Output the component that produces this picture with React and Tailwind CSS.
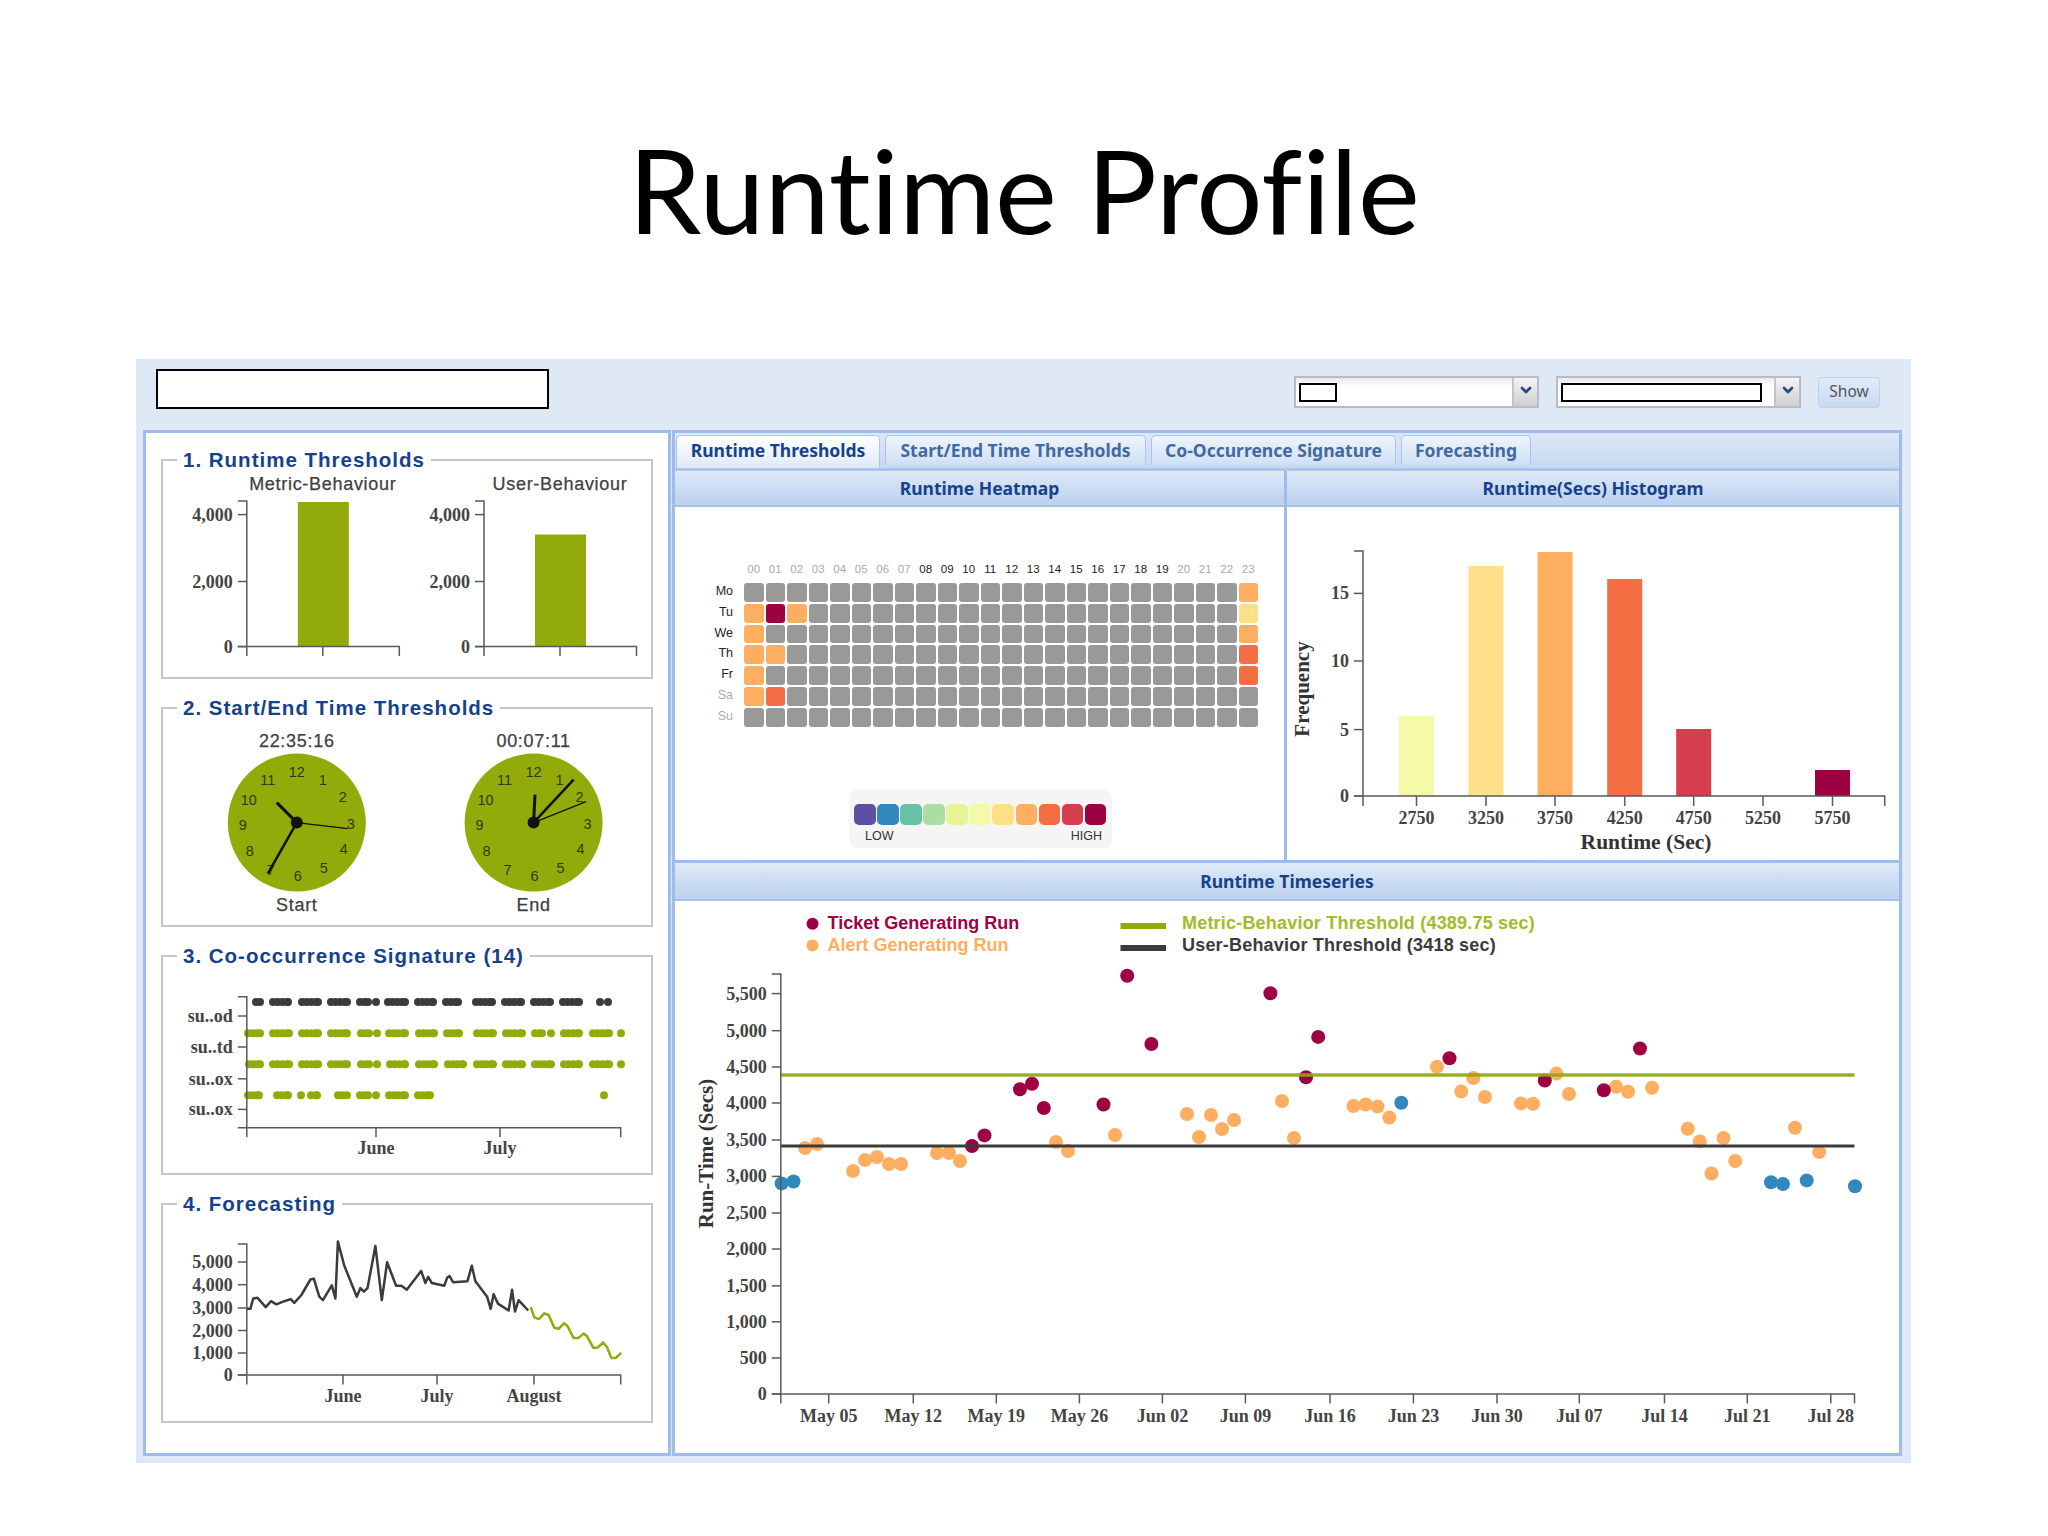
import React from 'react';
import { ChevronDown } from 'lucide-react';

const SERIF = "font-['Liberation_Serif',serif] text-[18px] font-bold fill-[#444]";
const SANS = "font-['Liberation_Sans',sans-serif]";
const CAPTION = "font-['Liberation_Sans',sans-serif] text-[18px] tracking-[0.7px] fill-[#404040] stroke-[#404040] stroke-[0.25px]";
const AXIS = '#5a5a5a';
const OLIVE = '#93ab0a';
const INK = '#3b3b3b';

const HOURS = Array.from({ length: 24 }, (_, i) => String(i).padStart(2, '0'));
const DAYS = ['Mo', 'Tu', 'We', 'Th', 'Fr', 'Sa', 'Su'];
const SPECTRAL = ['#5e4fa2', '#3288bd', '#66c2a5', '#abdda4', '#e6f598', '#f4faa8', '#fee08b', '#fdae61', '#f46d43', '#d53e4f', '#9e0142'];

// day -> hour -> colour, everything else is grey
const HEAT = {
  Mo: { 23: '#fdae61' },
  Tu: { 0: '#fdae61', 1: '#9e0142', 2: '#fdae61', 23: '#fee08b' },
  We: { 0: '#fdae61', 23: '#fdae61' },
  Th: { 0: '#fdae61', 1: '#fdae61', 23: '#f46d43' },
  Fr: { 0: '#fdae61', 23: '#f46d43' },
  Sa: { 0: '#fdae61', 1: '#f46d43' },
  Su: {},
};

const BARS = [
  { x: 1416.5, top: 716, color: '#f4faa8', label: '2750' },
  { x: 1486, top: 566, color: '#fee08b', label: '3250' },
  { x: 1555, top: 552, color: '#fdae61', label: '3750' },
  { x: 1624.7, top: 579, color: '#f46d43', label: '4250' },
  { x: 1693.7, top: 729, color: '#d53e4f', label: '4750' },
  { x: 1763, top: 796, color: '#d53e4f', label: '5250' },
  { x: 1832.5, top: 770, color: '#9e0142', label: '5750' },
];

const SERIES_TICKS = [
  ['5,500', 993.6], ['5,000', 1030.7], ['4,500', 1067], ['4,000', 1103], ['3,500', 1140], ['3,000', 1176.4],
  ['2,500', 1213], ['2,000', 1249], ['1,500', 1285.9], ['1,000', 1321.8], ['500', 1358], ['0', 1394],
];
const SERIES_DATES = [
  ['May 05', 828.7], ['May 12', 913.3], ['May 19', 996.3], ['May 26', 1079.4], ['Jun 02', 1162.4], ['Jun 09', 1245.4],
  ['Jun 16', 1330], ['Jun 23', 1413.4], ['Jun 30', 1497], ['Jul 07', 1579.3], ['Jul 14', 1664.5], ['Jul 21', 1747.3], ['Jul 28', 1830.8],
];

const ORANGE_DOTS = [
  [805, 1148], [817, 1144], [853, 1171], [865, 1160], [877, 1157], [889, 1164], [901, 1164], [937, 1153], [949, 1153], [960, 1161],
  [1056, 1142], [1068, 1151], [1115, 1135], [1187, 1114], [1199, 1137], [1211, 1115], [1222, 1129], [1234, 1120], [1282, 1101], [1294, 1138],
  [1353.5, 1106], [1365.6, 1104.5], [1377.6, 1106.6], [1389.3, 1117.6], [1437, 1066.7], [1461.2, 1091.4], [1473.3, 1078], [1485, 1097],
  [1521, 1103.4], [1533, 1103.7], [1556.4, 1073.6], [1569, 1094], [1616, 1086.7], [1628, 1091.7], [1652, 1087.7], [1687.8, 1128.8],
  [1699.8, 1141.5], [1723.5, 1138], [1711.5, 1173.5], [1735.2, 1161], [1795, 1127.7], [1819.2, 1152],
];
const TICKET_DOTS = [
  [972, 1146], [984.5, 1135.4], [1020, 1089.2], [1032, 1083.8], [1043.8, 1108], [1103.5, 1104.5], [1127.2, 975.8], [1151.4, 1044], [1270.4, 993.2],
  [1306, 1077.2], [1318.2, 1036.9], [1449.5, 1058.3], [1544.8, 1080.5], [1603.8, 1090.3], [1640, 1048.5],
];
const BLUE_DOTS = [
  [781.6, 1183.4], [793.5, 1181.5], [1401.3, 1102.7], [1771, 1182.3], [1783, 1184], [1806.7, 1180.4], [1855, 1186.3],
];

const FORECAST_ACTUAL = [
  [327,1100],[337,1100],[345,1070],[357,1068],[380,1095],[395,1078],[410,1087],[432,1078],[450,1072],[460,1083],[480,1060],[505,1015],[515,1013],
  [530,1065],[540,1075],[565,1032],[575,1070],[582,905],[600,975],[635,1065],[645,1040],[655,1050],[665,1040],[687,918],[705,1075],[720,965],
  [745,1033],[760,1033],[775,1045],[815,990],[827,1025],[835,1007],[845,1025],[880,1033],[888,1010],[895,1005],[905,1023],[945,1020],[957,975],
  [967,1020],[1000,1065],[1010,1100],[1018,1058],[1030,1085],[1060,1105],[1070,1045],[1078,1108],[1088,1075],[1115,1105],
];
const FORECAST_PREDICTED = [
  [1122,1095],[1132,1125],[1145,1130],[1160,1113],[1172,1118],[1188,1155],[1200,1158],[1215,1142],[1225,1150],[1242,1185],[1255,1185],[1270,1172],
  [1280,1180],[1297,1213],[1310,1212],[1325,1198],[1335,1210],[1348,1243],[1360,1243],[1375,1228],
];
const toForecast = (pts) => pts.map(([x, y]) => `${(130 + x / 2.8).toFixed(1)},${(930 + y / 2.904).toFixed(1)}`).join(' ');

// runs of dots for the signature rows: [from, to] along x, outer edges of the run
const SIGNATURE = [
  { y: 1002, color: INK, runs: [[252,264],[269,292],[298,322],[327,351],[356,372],[376,376],[384,409],[414,437],[442,462],[472,496],[501,525],[530,554],[559,583],[600,600],[608,608]] },
  { y: 1033.3, color: OLIVE, runs: [[244,264],[269,293],[298,322],[327,351],[357,373],[377,377],[385,409],[415,438],[443,463],[473,497],[502,526],[531,546],[551,551],[560,583],[589,613],[621,621]] },
  { y: 1064.3, color: OLIVE, runs: [[245,264],[269,293],[298,322],[327,351],[357,373],[377,377],[386,409],[415,438],[444,467],[473,497],[502,526],[531,555],[560,583],[589,613],[621,621]] },
  { y: 1095.3, color: OLIVE, runs: [[244,263],[273,292],[301,301],[307,321],[334,351],[356,372],[376,376],[385,409],[414,434],[604,604]] },
];
const dotsInRun = ([from, to]) => {
  if (from === to) return [from];
  const out = [];
  for (let x = from + 4; x < to - 4; x += 4.6) out.push(x);
  out.push(to - 4);
  return out;
};

const CLOCK_NUMBERS = [
  ['12', 0, -51], ['1', 26, -43], ['2', 46, -26], ['3', 54, 1], ['4', 47, 26], ['5', 27, 45],
  ['6', 1, 53], ['7', -26, 47], ['8', -47, 28], ['9', -54, 2], ['10', -48, -23], ['11', -29, -43],
];

function YTick({ x, y, label, left = 9 }) {
  return (
    <g>
      <line x1={x - left} x2={x} y1={y} y2={y} stroke={AXIS} strokeWidth="1.5" />
      <text x={x - left - 5} y={y + 6} textAnchor="end" className={SERIF}>{label}</text>
    </g>
  );
}

function Frame({ x, right, top, base, tick = 9.5 }) {
  return (
    <path d={`M${x - 9} ${top}H${x}V${base + tick}M${x - 9} ${base}H${right}V${base + tick}`} fill="none" stroke={AXIS} strokeWidth="1.5" />
  );
}

function Section({ title, children }) {
  return (
    <fieldset className="h-[231px] border-2 border-[#c6c6c6]">
      <legend className={`ml-[14px] px-[6px] text-[20.5px] leading-6 tracking-[1px] font-bold text-[#15428b] ${SANS}`}>{title}</legend>
      {children}
    </fieldset>
  );
}

function Clock({ cx, time, label, hour, minute, second }) {
  return (
    <g>
      <text x={cx} y={747} textAnchor="middle" className={CAPTION}>{time}</text>
      <circle cx={cx} cy={822.6} r={69} fill={OLIVE} />
      {CLOCK_NUMBERS.map(([n, dx, dy]) => (
        <text key={n} x={cx + dx} y={822.6 + dy + 5} textAnchor="middle" className={`${SANS} text-[14.5px] fill-[#2e3a05]`}>{n}</text>
      ))}
      <line x1={cx} y1={822.6} x2={cx + hour[0]} y2={822.6 + hour[1]} stroke="#111" strokeWidth="3" />
      <line x1={cx} y1={822.6} x2={cx + minute[0]} y2={822.6 + minute[1]} stroke="#111" strokeWidth="2.5" />
      <line x1={cx} y1={822.6} x2={cx + second[0]} y2={822.6 + second[1]} stroke="#111" strokeWidth="1.2" />
      <circle cx={cx} cy={822.6} r={6} fill="#111" />
      <text x={cx} y={911} textAnchor="middle" className={CAPTION}>{label}</text>
    </g>
  );
}

function ThresholdChart({ x, barTop, title }) {
  const base = 646.6;
  return (
    <g>
      <text x={x + 76} y={490} textAnchor="middle" className={CAPTION}>{title}</text>
      <rect x={x + 51} y={barTop} width={51} height={base - barTop} fill={OLIVE} />
      <Frame x={x} right={x + 152.5} top={501} base={base} />
      <line x1={x + 76} x2={x + 76} y1={base} y2={base + 9.5} stroke={AXIS} strokeWidth="1.5" />
      <YTick x={x} y={514.6} label="4,000" />
      <YTick x={x} y={581.5} label="2,000" />
      <YTick x={x} y={base} label="0" />
    </g>
  );
}

function PanelHeader({ children }) {
  return (
    <div className="flex items-center justify-center bg-linear-to-b from-[#e1ebf8] via-[#cbdcf3] to-[#bcd2ef] border-b-2 border-[#a3c0e9]">
      <span className={`text-[17.5px] font-bold text-[#15428b] font-['Noto_Sans',sans-serif]`}>{children}</span>
    </div>
  );
}

function Combo({ width, boxWidth }) {
  return (
    <div className={`flex h-[32px] border-2 border-[#b8bcc6] bg-linear-to-b from-[#e9e9e9] to-white to-30% ${width}`}>
      <div className="flex-1 flex items-center pl-[3px]">
        <div className={`h-[19px] border-2 border-black bg-white ${boxWidth}`}></div>
      </div>
      <div className="w-[25px] flex justify-center pt-[4px] border-l-2 border-[#c4c4c4] bg-linear-to-b from-[#f4f4f4] to-[#cfcfcf]">
        <ChevronDown className="w-[16px] h-[16px] text-[#28458a]" strokeWidth={4} />
      </div>
    </div>
  );
}

function Tab({ width, active, children }) {
  return (
    <div className={`${width} ${active ? 'h-[33.5px] text-[#15428b] bg-linear-to-b from-white to-[#dfe9f7]' : 'h-[30px] text-[#41699f] bg-linear-to-b from-[#eef4fb] to-[#cfe0f5]'} pt-[2px] text-center border-x border-t border-[#aac6ec] rounded-t-[5px] text-[17.5px] leading-6 font-bold font-['Noto_Sans',sans-serif]`}>
      {children}
    </div>
  );
}

export default function App() {
  return (
    <div className="w-[2048px] h-[1536px] bg-white overflow-hidden">
      <h1 className="h-[359px] pt-[116px] text-center text-[117px] leading-[146px] text-black font-['Lato',sans-serif] [font-variant-ligatures:none]">Runtime Profile</h1>

      <div className="ml-[136px] w-[1775px] h-[1104px] px-[7px] bg-[#dfe8f5]">
        {/* toolbar */}
        <div className="h-[71px] flex items-start pt-[10px] pl-[13px] pr-[24px]">
          <div className="w-[393px] h-[40px] border-2 border-black bg-white"></div>
          <div className="ml-auto mt-[7px] flex items-center gap-[17px]">
            <Combo width="w-[245px]" boxWidth="w-[38px]" />
            <Combo width="w-[245px]" boxWidth="w-[201px]" />
            <button className="w-[62px] h-[31px] rounded-[4px] border border-[#bdd1ec] bg-linear-to-b from-[#e2ecf8] to-[#c7d9f1] text-[15.5px] text-[#555] font-['Noto_Sans',sans-serif]">Show</button>
          </div>
        </div>

        <div className="flex gap-[1px] h-[1026px]">
          {/* left column */}
          <div className="w-[528px] pt-[15px] px-[15px] flex flex-col gap-[17px] border-[3px] border-[#9dbde8] bg-white">
            <Section title="1. Runtime Thresholds">
              <svg width="488" height="205" viewBox="163 472 488 205">
                <ThresholdChart x={246.8} barTop={502} title="Metric-Behaviour" />
                <ThresholdChart x={484} barTop={534.5} title="User-Behaviour" />
              </svg>
            </Section>

            <Section title="2. Start/End Time Thresholds">
              <svg width="488" height="205" viewBox="163 720 488 205">
                <Clock cx={296.8} time="22:35:16" label="Start" hour={[-20, -20]} minute={[-29, 51]} second={[51, 6]} />
                <Clock cx={533.6} time="00:07:11" label="End" hour={[1.4, -28]} minute={[40, -43]} second={[52.5, -21]} />
              </svg>
            </Section>

            <Section title="3. Co-occurrence Signature (14)">
              <svg width="488" height="205" viewBox="163 968 488 205">
                {SIGNATURE.map((row) => row.runs.flatMap(dotsInRun).map((x, i) => (
                  <circle key={`${row.y}-${i}`} cx={x} cy={row.y} r={4} fill={row.color} />
                )))}
                <Frame x={246.8} right={620.7} top={996.8} base={1127.7} />
                <YTick x={246.8} y={1016} label="su..od" />
                <YTick x={246.8} y={1047} label="su..td" />
                <YTick x={246.8} y={1078.8} label="su..ox" />
                <YTick x={246.8} y={1109.4} label="su..ox" />
                <line x1={376} x2={376} y1={1127.7} y2={1137} stroke={AXIS} strokeWidth="1.5" />
                <line x1={500} x2={500} y1={1127.7} y2={1137} stroke={AXIS} strokeWidth="1.5" />
                <text x={376} y={1154} textAnchor="middle" className={SERIF}>June</text>
                <text x={500} y={1154} textAnchor="middle" className={SERIF}>July</text>
              </svg>
            </Section>

            <Section title="4. Forecasting">
              <svg width="488" height="205" viewBox="163 1216 488 205">
                <Frame x={246.8} right={620.7} top={1244} base={1375} />
                <YTick x={246.8} y={1262} label="5,000" />
                <YTick x={246.8} y={1284.7} label="4,000" />
                <YTick x={246.8} y={1308} label="3,000" />
                <YTick x={246.8} y={1330.5} label="2,000" />
                <YTick x={246.8} y={1353} label="1,000" />
                <YTick x={246.8} y={1375} label="0" />
                {[['June', 343], ['July', 437], ['August', 534]].map(([label, x]) => (
                  <g key={label}>
                    <line x1={x} x2={x} y1={1375} y2={1384.5} stroke={AXIS} strokeWidth="1.5" />
                    <text x={x} y={1402} textAnchor="middle" className={SERIF}>{label}</text>
                  </g>
                ))}
                <polyline points={toForecast(FORECAST_ACTUAL)} fill="none" stroke={INK} strokeWidth="2.5" strokeLinejoin="round" />
                <polyline points={toForecast(FORECAST_PREDICTED)} fill="none" stroke={OLIVE} strokeWidth="2.5" strokeLinejoin="round" />
              </svg>
            </Section>
          </div>

          {/* right column */}
          <div className="w-[1230px] flex flex-col border-[3px] border-[#9dbde8] bg-white">
            <div className="h-[38px] pt-[1.5px] pl-[1px] flex items-start gap-[5px] border-b-[3px] border-[#a9c5ec] bg-linear-to-b from-[#dde8f6] to-[#c6d9f2]">
              <Tab width="w-[204px]" active>Runtime Thresholds</Tab>
              <Tab width="w-[261px]">Start/End Time Thresholds</Tab>
              <Tab width="w-[245px]">Co-Occurrence Signature</Tab>
              <Tab width="w-[130px]">Forecasting</Tab>
            </div>

            <div className="flex h-[392px] border-b-[3px] border-[#9dbde8]">
              <div className="w-[609px] grid grid-rows-[36px_1fr] border-r-[3px] border-[#9dbde8] box-content">
                <PanelHeader>Runtime Heatmap</PanelHeader>
                <div className="pt-[55px] pl-[9px]">
                  <div className="grid grid-cols-[58px_repeat(24,19.5px)] gap-x-[2px] gap-y-[2px] items-start">
                    <div></div>
                    {HOURS.map((h, i) => (
                      <div key={h} className={`h-[19px] text-center text-[11.5px] leading-[14px] ${SANS} ${i >= 8 && i < 20 ? 'text-[#222]' : 'text-[#aaa]'}`}>{h}</div>
                    ))}
                    {DAYS.map((d, row) => (
                      <React.Fragment key={d}>
                        <div className={`h-[18.8px] pr-[9px] text-right text-[12.5px] leading-[16px] ${SANS} ${row > 4 ? 'text-[#aaa]' : 'text-[#222]'}`}>{d}</div>
                        {HOURS.map((h, i) => (
                          <div key={h} className="h-[18.8px] rounded-[3px]" style={{ background: HEAT[d][i] || '#999999' }}></div>
                        ))}
                      </React.Fragment>
                    ))}
                  </div>
                  <div className={`mt-[63px] ml-[165px] w-[263px] h-[58px] pt-[14px] pl-[5px] rounded-lg bg-[#f5f5f6] ${SANS}`}>
                    <div className="flex gap-[1.4px]">
                      {SPECTRAL.map((c) => (
                        <div key={c} className="w-[21.7px] h-[21.5px] rounded-[5px]" style={{ background: c }}></div>
                      ))}
                    </div>
                    <div className="flex justify-between pl-[11px] pr-[10px] text-[12.5px] leading-[14px] mt-[4px] text-[#333]">
                      <span>LOW</span>
                      <span>HIGH</span>
                    </div>
                  </div>
                </div>
              </div>

              <div className="flex-1 grid grid-rows-[36px_1fr]">
                <PanelHeader>Runtime(Secs) Histogram</PanelHeader>
                <svg width="612" height="353" viewBox="1287 507 612 353">
                  {BARS.map((b) => (
                    <g key={b.label}>
                      <rect x={b.x - 17.5} y={b.top} width={35} height={796 - b.top} fill={b.color} />
                      <line x1={b.x} x2={b.x} y1={796} y2={806} stroke={AXIS} strokeWidth="1.5" />
                      <text x={b.x} y={824} textAnchor="middle" className={SERIF}>{b.label}</text>
                    </g>
                  ))}
                  <Frame x={1363} right={1884.7} top={551} base={796} tick={10} />
                  <YTick x={1363} y={593.4} label="15" />
                  <YTick x={1363} y={661} label="10" />
                  <YTick x={1363} y={729.6} label="5" />
                  <YTick x={1363} y={796} label="0" />
                  <text x={1646} y={849} textAnchor="middle" className="font-['Liberation_Serif',serif] text-[21.5px] font-bold fill-[#333]">Runtime (Sec)</text>
                  <text transform="rotate(-90 1309 689)" x={1309} y={689} textAnchor="middle" className="font-['Liberation_Serif',serif] text-[21px] font-bold fill-[#333]">Frequency</text>
                </svg>
              </div>
            </div>

            <div className="flex-1 grid grid-rows-[38px_1fr]">
              <PanelHeader>Runtime Timeseries</PanelHeader>
              <svg width="1224" height="552" viewBox="675 901 1224 552">
                <circle cx={812.5} cy={923.8} r={6} fill="#9e0142" />
                <circle cx={812.5} cy={945.6} r={6} fill="#fdae61" />
                <text x={827.5} y={929} className={`${SANS} text-[18px] font-bold fill-[#9e0142]`}>Ticket Generating Run</text>
                <text x={827.5} y={951} className={`${SANS} text-[18px] font-bold fill-[#fdae61]`}>Alert Generating Run</text>
                <rect x={1120.5} y={923} width={45.5} height={6} fill={OLIVE} />
                <rect x={1120.5} y={945} width={45.5} height={6} fill={INK} />
                <text x={1182} y={929} className={`${SANS} text-[18px] tracking-[0.2px] font-bold fill-[#a3ba2a]`}>Metric-Behavior Threshold (4389.75 sec)</text>
                <text x={1182} y={951} className={`${SANS} text-[18px] tracking-[0.2px] font-bold fill-[#3b3b3b]`}>User-Behavior Threshold (3418 sec)</text>

                <text transform="rotate(-90 713 1153.5)" x={713} y={1153.5} textAnchor="middle" className="font-['Liberation_Serif',serif] text-[21px] font-bold fill-[#333]">Run-Time (Secs)</text>

                {ORANGE_DOTS.map(([x, y]) => <circle key={`o${x}`} cx={x} cy={y} r={7} fill="#fdae61" />)}
                {BLUE_DOTS.map(([x, y]) => <circle key={`b${x}`} cx={x} cy={y} r={7} fill="#3288bd" />)}
                {TICKET_DOTS.map(([x, y]) => <circle key={`t${x}`} cx={x} cy={y} r={7} fill="#9e0142" />)}

                <line x1={780.8} x2={1854.5} y1={1075} y2={1075} stroke="#8ea70d" strokeWidth="3.5" strokeOpacity="0.9" />
                <line x1={780.8} x2={1854.5} y1={1146} y2={1146} stroke={INK} strokeWidth="3" />

                <Frame x={780.8} right={1854.5} top={974} base={1394} tick={9.5} />
                {SERIES_TICKS.map(([label, y]) => <YTick key={label} x={780.8} y={y} label={label} />)}
                {SERIES_DATES.map(([label, x]) => (
                  <g key={label}>
                    <line x1={x} x2={x} y1={1394} y2={1403.5} stroke={AXIS} strokeWidth="1.5" />
                    <text x={x} y={1422} textAnchor="middle" className={SERIF}>{label}</text>
                  </g>
                ))}
              </svg>
            </div>
          </div>
        </div>
      </div>
    </div>
  );
}
